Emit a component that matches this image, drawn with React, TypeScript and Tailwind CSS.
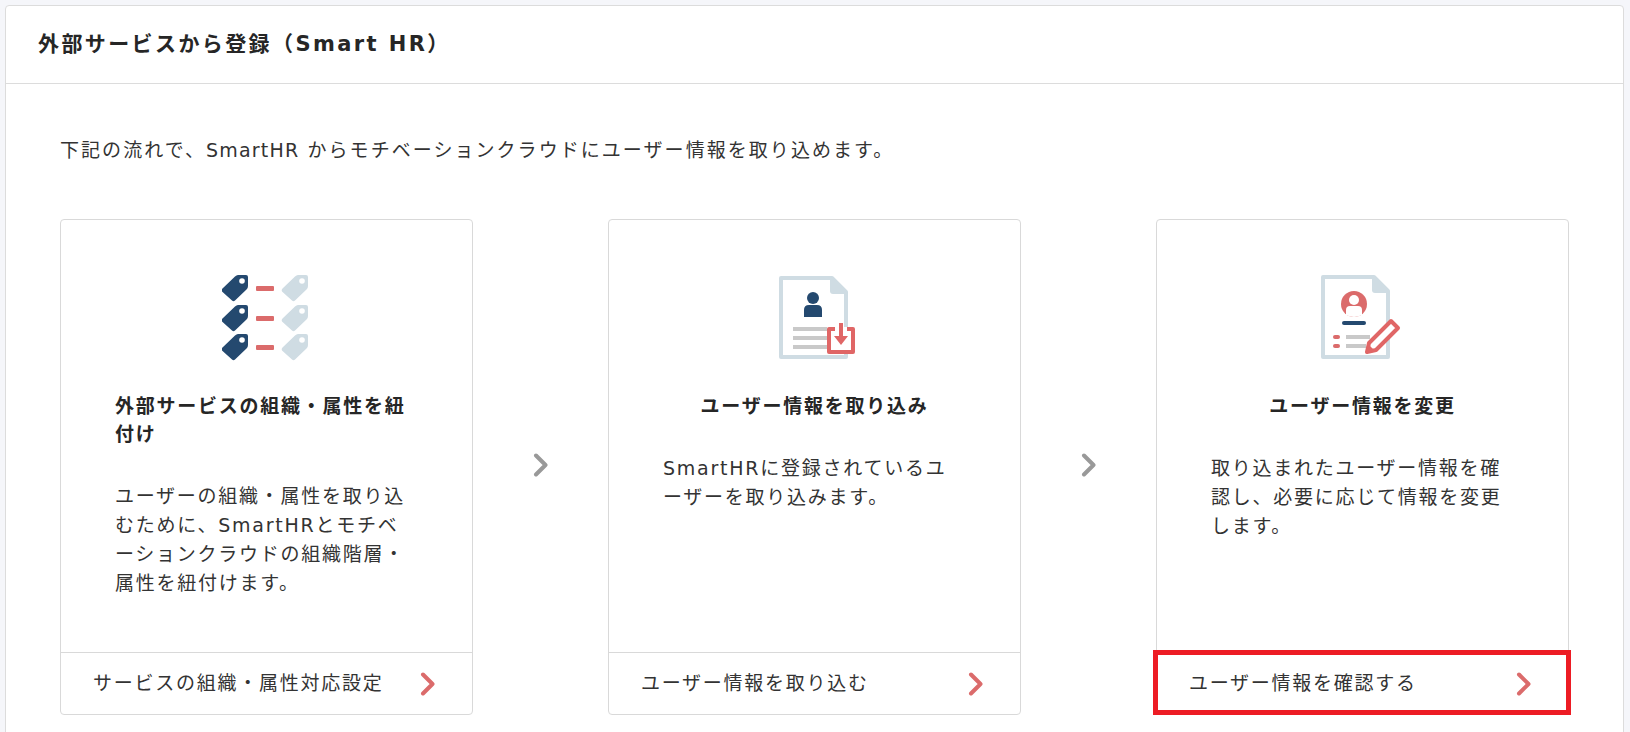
const font = { fontFamily: '"DejaVu Sans", "Noto Sans CJK JP", sans-serif' }

function Chevron({ color }: { color: string }) {
  return (
    <svg width="16" height="24" viewBox="0 0 16 24" fill="none">
      <path d="M3 2.5 L12.5 12 L3 21.5" stroke={color} strokeWidth="4" strokeLinecap="round" strokeLinejoin="round" />
    </svg>
  )
}

function Tag({ x, y, color }: { x: number; y: number; color: string }) {
  return (
    <g transform={`translate(${x} ${y})`}>
      <path
        d="M0 16.5 Q-1 15 0.5 13.5 L13 1.5 Q14.5 0 16 0 L24 0 Q26 0 26 2 L26 11 Q26 13 24.5 14.5 L13 25.5 Q11.5 27 10 25.5 Z"
        fill={color}
      />
      <circle cx="20" cy="6" r="2.8" fill="#fff" />
    </g>
  )
}

function TagsIcon() {
  return (
    <svg width="90" height="90" viewBox="0 0 90 90">
      <Tag x={0} y={0} color="#24496f" />
      <Tag x={0} y={30} color="#24496f" />
      <Tag x={0} y={59} color="#24496f" />
      <rect x="34" y="11" width="18" height="5" rx="1" fill="#db6b6b" />
      <rect x="34" y="41" width="18" height="5" rx="1" fill="#db6b6b" />
      <rect x="34" y="70" width="18" height="5" rx="1" fill="#db6b6b" />
      <Tag x={60} y={0} color="#cfdce3" />
      <Tag x={60} y={30} color="#cfdce3" />
      <Tag x={60} y={59} color="#cfdce3" />
    </svg>
  )
}

function ImportIcon() {
  return (
    <svg width="90" height="90" viewBox="-7 0 90 90">
      <path
        d="M4 3 L55 3 L69 17 L69 82 L4 82 Z"
        fill="#fff"
        stroke="#cfdce3"
        strokeWidth="4"
        strokeLinejoin="round"
      />
      <path d="M53 3 L69 19 L56 19 Q53 19 53 16 Z" fill="#cfdce3" />
      <circle cx="36" cy="23" r="6" fill="#24496f" />
      <path d="M27 42 L27 35 Q27 30 32 30 L40 30 Q45 30 45 35 L45 42 Z" fill="#24496f" />
      <rect x="16" y="52" width="36" height="4" fill="#c9c9c9" />
      <rect x="16" y="61" width="36" height="4" fill="#c9c9c9" />
      <rect x="16" y="70" width="36" height="4" fill="#c9c9c9" />
      <rect x="50" y="52" width="27" height="27" fill="#fff" />
      <path d="M58 54 L52 54 L52 77 L76 77 L76 54 L70 54" fill="none" stroke="#e06666" strokeWidth="4" strokeLinejoin="round" />
      <path d="M62 48 L66 48 L66 61 L71 61 L64 70 L57 61 L62 61 Z" fill="#e06666" />
    </svg>
  )
}

function EditIcon() {
  return (
    <svg width="90" height="90" viewBox="-1 0 90 90">
      <path
        d="M4 2 L55 2 L69 16 L69 82 L4 82 Z"
        fill="#fff"
        stroke="#cfdce3"
        strokeWidth="4"
        strokeLinejoin="round"
      />
      <path d="M53 2 L69 18 L56 18 Q53 18 53 15 Z" fill="#cfdce3" />
      <circle cx="35" cy="29" r="13" fill="#db6b6b" />
      <circle cx="35" cy="25" r="5" fill="#fff" />
      <path d="M27 40 L27 35 Q27 31 31 31 L39 31 Q43 31 43 35 L43 40 Q35 44 27 40 Z" fill="#fff" />
      <rect x="23" y="46" width="24" height="4" rx="2" fill="#24496f" />
      <rect x="14" y="60" width="7" height="4" rx="2" fill="#db6b6b" />
      <rect x="14" y="69" width="7" height="4" rx="2" fill="#db6b6b" />
      <rect x="27" y="60" width="24" height="4" fill="#c9c9c9" />
      <rect x="27" y="69" width="20" height="4" fill="#c9c9c9" />
      <path d="M50 68 L72 46 L79 53 L57 75 L48 77 Z" fill="#fff" stroke="#e06666" strokeWidth="4" strokeLinejoin="round" />
      <path d="M47 78 L49 69 L56 76 Z" fill="#e06666" />
    </svg>
  )
}

interface StepProps {
  icon: React.ReactNode
  title: string
  text: string
  link: string
}

function Step({ icon, title, text, link }: StepProps) {
  return (
    <div className="flex flex-col w-[413px] h-[496px] border border-[#d9d9d9] rounded bg-white">
      <div className="flex-1 px-[54px] pt-[55px]">
        <div className="flex justify-center h-[90px] mb-[27px]">{icon}</div>
        <h3 className={`text-[19px] leading-[28px] font-bold text-[#262626] tracking-[1.75px] ${title.length < 15 ? 'text-center' : ''}`}>
          {title}
        </h3>
        <p className="mt-[34px] text-[19px] leading-[29px] text-[#333] tracking-[1.75px]">{text}</p>
      </div>
      <a className="flex items-center justify-between h-[62px] pl-[32px] pr-[36px] border-t border-[#d9d9d9] text-[19px] text-[#333] tracking-[1.75px]">
        <span>{link}</span>
        <Chevron color="#db6b6b" />
      </a>
    </div>
  )
}

function Arrow() {
  return (
    <div className="flex-1 flex justify-center pt-[234px]">
      <Chevron color="#999" />
    </div>
  )
}

export default function App() {
  return (
    <div className="h-[732px] overflow-hidden bg-[#f5f6fa] pt-[5px] pl-[5px] pr-[6px]" style={font}>
      <div className="relative bg-white border border-[#dcdcdc] rounded h-[800px]">
        <div className="flex items-center h-[78px] pl-[32px] border-b border-[#dcdcdc]">
          <h2 className="text-[21px] font-bold text-[#262626] tracking-[2.4px]">外部サービスから登録（Smart HR）</h2>
        </div>
        <div className="px-[54px] pt-[52px]">
          <p className="text-[19px] leading-[29px] text-[#333] tracking-[2.05px]">
            下記の流れで、<span className="tracking-[1.2px]">SmartHR</span> からモチベーションクラウドにユーザー情報を取り込めます。
          </p>
          <div className="flex mt-[54px]">
            <Step
              icon={<TagsIcon />}
              title="外部サービスの組織・属性を紐付け"
              text="ユーザーの組織・属性を取り込むために、SmartHRとモチベーションクラウドの組織階層・属性を紐付けます。"
              link="サービスの組織・属性対応設定"
            />
            <Arrow />
            <Step
              icon={<ImportIcon />}
              title="ユーザー情報を取り込み"
              text="SmartHRに登録されているユーザーを取り込みます。"
              link="ユーザー情報を取り込む"
            />
            <Arrow />
            <div className="relative">
              <Step
                icon={<EditIcon />}
                title="ユーザー情報を変更"
                text="取り込まれたユーザー情報を確認し、必要に応じて情報を変更します。"
                link="ユーザー情報を確認する"
              />
              <div className="absolute left-[-3px] right-[-2px] bottom-0 h-[65px] border-[5px] border-[#ed1c24]" />
            </div>
          </div>
        </div>
      </div>
    </div>
  )
}
